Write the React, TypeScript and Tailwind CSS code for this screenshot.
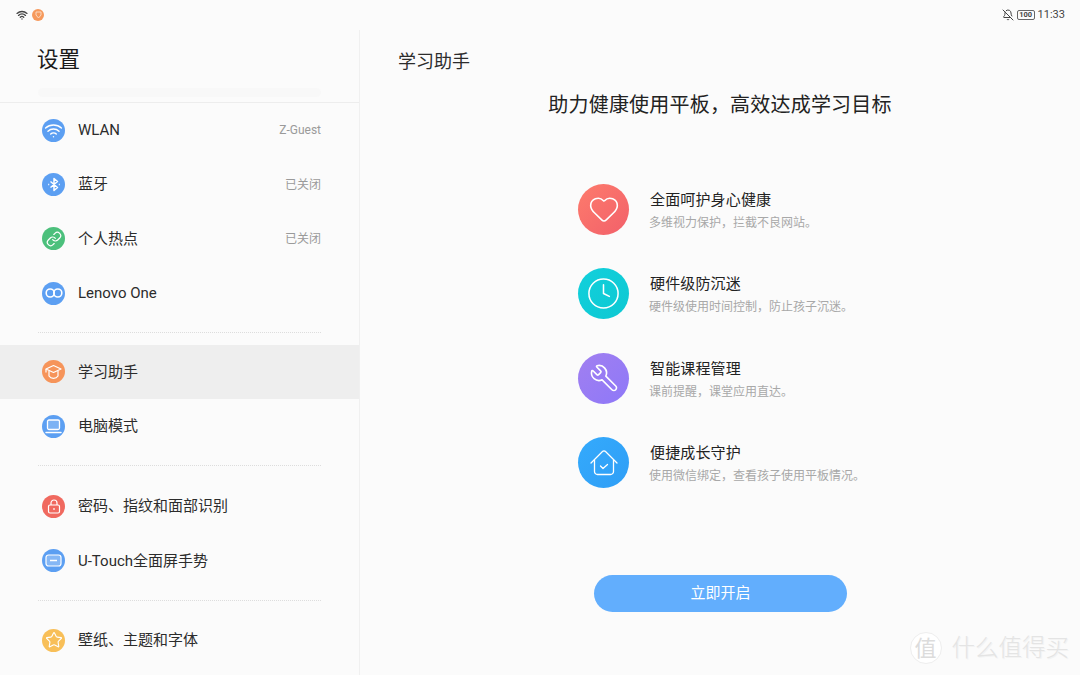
import { Wifi, Link, Star, Heart, Clock, Wrench, BellOff } from "lucide-react";
import type { ReactNode } from "react";

const FONT = "font-['Roboto','Noto_Sans_CJK_SC',sans-serif]";

function Badge({ color, children }: { color: string; children: ReactNode }) {
  return (
    <span className={`flex h-[23px] w-[23px] shrink-0 items-center justify-center rounded-full text-white ${color}`}>
      {children}
    </span>
  );
}

function Row({ icon, label, value, active }: { icon: ReactNode; label: string; value?: string; active?: boolean }) {
  return (
    <div className={`flex h-[54.4px] items-center pl-[42px] pr-[38px] ${active ? "bg-[#eeeeee]" : ""}`}>
      {icon}
      <span className="ml-[13px] flex-1 text-[15px] text-[#2c2c2c]">{label}</span>
      {value && <span className="text-[12px] text-[#9a9a9a]">{value}</span>}
    </div>
  );
}

function Divider() {
  return <div className="mx-[38px] border-t border-dotted border-[#dddddd]" />;
}

function Feature({ bg, icon, title, desc }: { bg: string; icon: ReactNode; title: string; desc: string }) {
  return (
    <div className="flex h-[84.5px] items-center">
      <span className={`flex h-[51px] w-[51px] shrink-0 items-center justify-center rounded-full text-white ${bg}`}>
        {icon}
      </span>
      <div className="ml-[20px] flex flex-col pt-[2px]">
        <span className="pl-[1px] text-[15px] leading-[22px] tracking-[0.15px] text-[#222222]">{title}</span>
        <span className="mt-[3px] text-[12px] leading-[18px] text-[#a8a8a8]">{desc}</span>
      </div>
    </div>
  );
}

export default function App() {
  return (
    <div className={`flex h-[675px] w-[1080px] flex-col overflow-hidden bg-[#fbfbfb] ${FONT}`}>
      <div className="flex h-[30px] shrink-0 items-center justify-between pl-[16px] pr-[15px]">
        <div className="flex items-center gap-[4px]">
          <Wifi size={12} strokeWidth={2.6} className="text-[#444444]" />
          <span className="flex h-[12px] w-[12px] items-center justify-center rounded-full bg-[#f6995c]">
            <svg width="7" height="8" viewBox="0 0 7 8" fill="none" stroke="#fbd9bf" strokeWidth="1">
              <path d="M1 1h5v3L3.5 7 1 4z" />
            </svg>
          </span>
        </div>
        <div className="flex items-center text-[#444444]">
          <BellOff size={12} strokeWidth={2} />
          <span className="ml-[3px] flex h-[10px] w-[18px] items-center justify-center rounded-[2px] border border-[#666666] text-[7.5px] font-bold leading-none">
            100
          </span>
          <span className="ml-[3px] text-[11px]">11:33</span>
        </div>
      </div>

      <div className="flex min-h-0 flex-1">
        <aside className="w-[360px] shrink-0 overflow-hidden border-r border-[#f0f0f0]">
          <div className="h-[73px] border-b border-[#ededed] px-[38px]">
            <div className="-ml-[1px] pt-[15px] text-[21.5px] leading-[30px] text-[#1a1a1a]">设置</div>
            <div className="mt-[13px] h-[9px] rounded-full bg-[#f8f8f8]" />
          </div>
          <Row icon={<Badge color="bg-[#5c9ff2]"><Wifi size={19} strokeWidth={1.8} /></Badge>} label="WLAN" value="Z-Guest" />
          <Row
            icon={
              <Badge color="bg-[#5c9ff2]">
                <svg width="14" height="15" viewBox="0 0 14 15" fill="none" stroke="currentColor" strokeWidth="1.5" strokeLinejoin="round">
                  <path d="M3.5 4.5 10.5 10.5 7 13.5V1.5L10.5 4.5 3.5 10.5" />
                  <path d="M1.2 7.5h1M11.8 7.5h1" />
                </svg>
              </Badge>
            }
            label="蓝牙"
            value="已关闭"
          />
          <Row icon={<Badge color="bg-[#4cc07c]"><Link size={16} strokeWidth={1.8} /></Badge>} label="个人热点" value="已关闭" />
          <Row
            icon={
              <Badge color="bg-[#5c9ff2]">
                <svg width="18" height="18" viewBox="0 0 18 18" fill="none" stroke="currentColor" strokeWidth="1.6">
                  <circle cx="5.2" cy="9" r="4" />
                  <circle cx="12.8" cy="9" r="4" />
                </svg>
              </Badge>
            }
            label="Lenovo One"
          />
          <div className="mt-[11px] mb-[12px]"><Divider /></div>
          <Row
            active
            icon={
              <Badge color="bg-[#f6945a]">
                <svg width="17" height="16" viewBox="0 0 17 16" fill="none" stroke="currentColor" strokeWidth="1.2" strokeLinejoin="round">
                  <path d="M8.5 1.5 16 5 8.5 8.5 1 5z" />
                  <path d="M4 7v5c1 1.5 2.8 2.3 4.5 2.3S12 13.500 13 12V7" />
                  <path d="M1 5v3.500" />
                </svg>
              </Badge>
            }
            label="学习助手"
          />
          <Row
            icon={
              <Badge color="bg-[#5c9ff2]">
                <svg width="17" height="15" viewBox="0 0 17 15" fill="none" stroke="currentColor" strokeWidth="1.3" strokeLinecap="round">
                  <rect x="2.500" y="1" width="12" height="9.500" rx="1.500" fill="#ffffff33" />
                  <path d="M1 13.500h15" strokeWidth="1.500" />
                </svg>
              </Badge>
            }
            label="电脑模式"
          />
          <div className="mt-[12px] mb-[13px]"><Divider /></div>
          <Row
            icon={
              <Badge color="bg-[#f0695f]">
                <svg width="14" height="15" viewBox="0 0 14 15" fill="none" stroke="currentColor" strokeWidth="1.2">
                  <rect x="1.500" y="6" width="11" height="8" rx="1.500" />
                  <path d="M4 6V4a3 3 0 0 1 6 0v2" />
                  <path d="M7 9v2" />
                </svg>
              </Badge>
            }
            label="密码、指纹和面部识别"
          />
          <Row
            icon={
              <Badge color="bg-[#5c9ff2]">
                <svg width="17" height="13" viewBox="0 0 17 13" fill="none" stroke="currentColor" strokeWidth="1.2">
                  <rect x="1" y="1" width="15" height="11" rx="2.500" fill="#ffffff40" />
                  <path d="M5 6.500h7" strokeWidth="1.500" />
                </svg>
              </Badge>
            }
            label="U-Touch全面屏手势"
          />
          <div className="mt-[12px] mb-[12px]"><Divider /></div>
          <Row icon={<Badge color="bg-[#f8bf58]"><Star size={18} strokeWidth={1.5} /></Badge>} label="壁纸、主题和字体" />
        </aside>

        <main className="relative flex min-w-0 flex-1 flex-col">
          <div className="pl-[38px] pt-[19px] text-[18px] leading-[26px] text-[#2c2c2c]">学习助手</div>
          <div className="mt-[15px] text-center text-[20px] leading-[30px] tracking-[0.2px] text-[#222222]">
            助力健康使用平板，高效达成学习目标
          </div>
          <div className="ml-[218px] mt-[47px] flex flex-col">
            <Feature bg="bg-linear-to-br from-[#fd7b6c] to-[#f2606a]" icon={<Heart size={32} strokeWidth={1.2} />} title="全面呵护身心健康" desc="多维视力保护，拦截不良网站。" />
            <Feature bg="bg-linear-to-br from-[#12d0dc] to-[#0dc8d2]" icon={<Clock size={35} strokeWidth={1.05} />} title="硬件级防沉迷" desc="硬件级使用时间控制，防止孩子沉迷。" />
            <Feature bg="bg-linear-to-br from-[#a17ff0] to-[#8e78f8]" icon={<Wrench size={30} strokeWidth={1.3} className="-scale-x-100" />} title="智能课程管理" desc="课前提醒，课堂应用直达。" />
            <Feature
              bg="bg-linear-to-br from-[#34aafc] to-[#2f9ef6]"
              icon={
                <svg width="30" height="30" viewBox="0 0 30 30" fill="none" stroke="currentColor" strokeWidth="1.3" strokeLinecap="round" strokeLinejoin="round">
                  <path d="M2 15 13.500 3.500a2 2 0 0 1 3 0L28 15" />
                  <path d="M5.500 12v11.500a3 3 0 0 0 3 3h13a3 3 0 0 0 3-3V12" />
                  <path d="M11.500 18l2.500 2.500 4.500-4" />
                </svg>
              }
              title="便捷成长守护"
              desc="使用微信绑定，查看孩子使用平板情况。"
            />
          </div>
          <button className="ml-[234px] mt-[70px] h-[37px] w-[253px] rounded-full bg-[#62aefd] text-[15px] text-white">立即开启</button>

          <div className="absolute bottom-[11px] right-[11px] flex items-center text-[#e4e4e4]">
            <span className="flex h-[32px] w-[32px] items-center justify-center rounded-full border border-[#eeeeee] bg-white text-[22px] text-[#dcdcdc]">值</span>
            <span className="ml-[10px] text-[23.500px] font-light leading-[30px] [text-shadow:1px_1px_0_#f3f3f3]">什么值得买</span>
          </div>
        </main>
      </div>
    </div>
  );
}
